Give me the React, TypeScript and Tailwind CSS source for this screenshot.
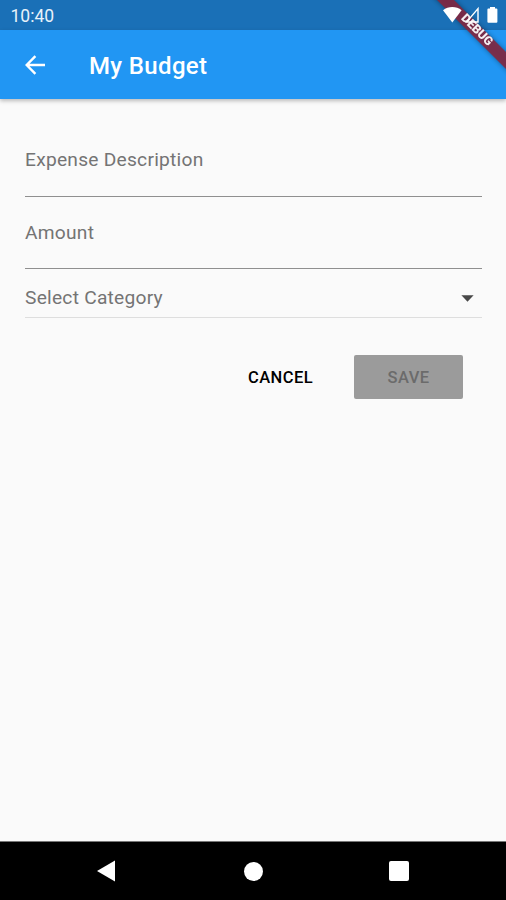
import React from 'react'

interface FieldProps {
  label: string
  className?: string
}

function DebugRibbon() {
  return (
    <svg className="pointer-events-none absolute top-0 right-0" width="80" height="80" viewBox="0 0 80 80">
      <defs>
        <filter id="ribbon-shadow" x="-20%" y="-20%" width="140%" height="140%">
          <feGaussianBlur stdDeviation="2.5" />
        </filter>
      </defs>
      <path d="M-9 -20 L100 89 V72 L8 -20Z" fill="#000" opacity="0.4" filter="url(#ribbon-shadow)" />
      <path d="M-9 -20 L100 89 V72 L8 -20Z" fill="#832842" opacity="0.9" />
    </svg>
  )
}

function StatusIcons() {
  return (
    <svg className="absolute top-0 right-0" width="80" height="80" viewBox="0 0 80 80" fill="#fff">
      <path d="M17 10.2 C22.2 5.8 30.4 5.8 35.6 10.2 L26.3 22.4Z" />
      <path d="M52 8.6 V22 H40.6Z" fill="none" stroke="#fff" strokeWidth="1.4" />
      <path d="M64 7 H69 V8.5 H70.4 Q71.4 8.5 71.4 9.5 V21.7 Q71.4 22.8 70.4 22.8 H62.4 Q61.4 22.8 61.4 21.7 V9.5 Q61.4 8.5 62.4 8.5 H64Z" />
      <text
        transform="translate(51.5 29.5) rotate(45)"
        textAnchor="middle"
        y="4.4"
        fontSize="12.2"
        fontWeight="900"
        fontFamily="Roboto, sans-serif"
        textLength="39"
        opacity="0.92"
      >
        DEBUG
      </text>
    </svg>
  )
}

function Field({ label, className = '' }: FieldProps) {
  return (
    <div className={`border-b border-[#8f8f8f] text-[19.2px] tracking-[0.24px] text-[#747474] ${className}`}>
      <span className="block leading-6">{label}</span>
    </div>
  )
}

export default function App() {
  return (
    <div className="relative flex h-[900px] w-[506px] flex-col overflow-hidden bg-[#fafafa] font-[Roboto,sans-serif]">
      <div className="flex h-[30px] shrink-0 items-center bg-[#1a70b7] pt-[3px] pl-[10.5px] text-[17.5px] text-[#e8f2fa]">
        10:40
      </div>
      <header className="flex h-[69px] shrink-0 items-center bg-[#2196f3] pl-[25px] text-white shadow-[0_2px_4px_rgba(0,0,0,0.25)]">
        <svg width="21" height="20" viewBox="0 0 21 20" fill="none" stroke="#fff" strokeWidth="2.4">
          <path d="M20 10 H2 M10.4 1.2 L1.7 10 L10.4 18.8" />
        </svg>
        <h1 className="ml-[43px] pt-[3px] text-[24px] font-medium tracking-[0.36px]">My Budget</h1>
      </header>

      <main className="flex grow flex-col pr-6 pl-[25px]">
        <Field label="Expense Description" className="h-[98px] pt-[49px]" />
        <Field label="Amount" className="h-[72px] pt-[24px]" />
        <div className="flex h-[49px] items-center justify-between border-b border-[#dedede] pt-[10px] pr-[8px] text-[19.2px] tracking-[0.24px] text-[#747474]">
          <span>Select Category</span>
          <svg width="13" height="7" viewBox="0 0 13 7" fill="#484848">
            <path d="M0.4 0.3 H12.6 L6.5 6.7Z" />
          </svg>
        </div>

        <div className="mt-[37px] flex justify-end gap-[41px] pr-[19px] text-[16.5px] font-medium tracking-[0.42px]">
          <button className="pt-0.5 text-black">CANCEL</button>
          <button className="h-[44px] w-[109px] rounded-[2px] bg-[#9b9b9b] pt-0.5 text-[#6b6b6b]">SAVE</button>
        </div>
      </main>

      <nav className="flex h-[59px] shrink-0 items-center border-t border-[#777] bg-black pl-[97px]">
        <svg width="18" height="22" viewBox="0 0 18 22" fill="#fff">
          <path d="M0 11 L18 0.5 V21.5Z" />
        </svg>
        <div className="ml-[129px] size-[19px] rounded-full bg-white" />
        <div className="ml-[126px] size-[20px] rounded-[2px] bg-white" />
      </nav>

      <DebugRibbon />
      <StatusIcons />
    </div>
  )
}
